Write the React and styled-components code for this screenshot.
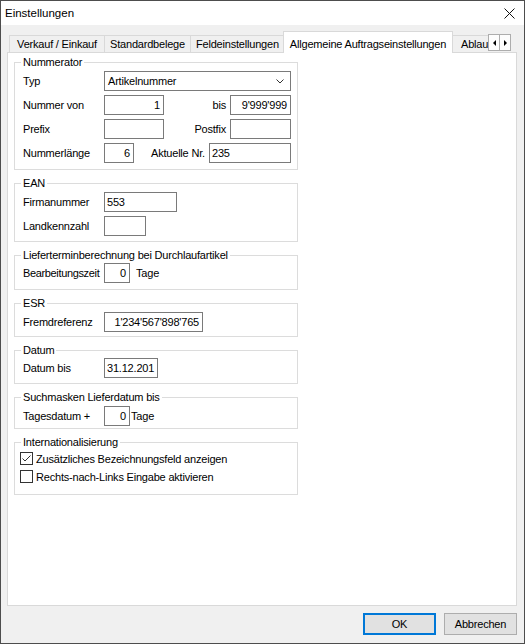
import React from 'react';
import styled, { createGlobalStyle } from 'styled-components';

const Global = createGlobalStyle`
  html, body { margin: 0; padding: 0; background: #fff; }
  body { font-family: "Liberation Sans", Arial, sans-serif; font-size: 11px; letter-spacing: -0.2px; color: #000; }
  * { box-sizing: border-box; }
`;

const Window = styled.div`
  width: 525px;
  height: 644px;
  border: 1px solid #4d4d4d;
  display: flex;
  flex-direction: column;
  background: #f0f0f0;
  overflow: hidden;
`;

const TitleBar = styled.div`
  height: 24px;
  flex: none;
  background: #fff;
  display: flex;
  align-items: center;
  justify-content: space-between;
  padding: 0 9px 0 4px;
  font-size: 11.5px;
  letter-spacing: 0;
`;

const Body = styled.div`
  flex: 1;
  display: flex;
  flex-direction: column;
  padding: 6px 7px 0 6px;
`;

const TabStrip = styled.div`
  height: 22px;
  margin-bottom: -1px;
  display: flex;
  align-items: flex-end;
  position: relative;
  z-index: 1;
`;

const TabsClip = styled.div`
  flex: 1;
  height: 22px;
  display: flex;
  align-items: flex-end;
  overflow: hidden;
  padding-left: 2px;
`;

const Tab = styled.div`
  flex: none;
  width: ${(p) => (p.$w ? `${p.$w}px` : 'auto')};
  height: ${(p) => (p.$active ? '22px' : '17px')};
  margin-bottom: ${(p) => (p.$active ? '0' : '1px')};
  margin-left: -1px;
  &:first-child { margin-left: 0; }
  padding: ${(p) => (p.$active ? '4px 5px 0' : `0 5px 0 ${p.$pl ?? 5}px`)};
  line-height: 16px;
  text-align: center;
  white-space: nowrap;
  background: ${(p) => (p.$active ? '#fff' : '#f0f0f0')};
  border: 1px solid #d9d9d9;
  border-bottom: none;
  position: relative;
  z-index: ${(p) => (p.$active ? 2 : 1)};
`;

const ScrollButtons = styled.div`
  flex: none;
  display: flex;
  margin: 0 6px 2px 0;
`;

const ScrollButton = styled.div`
  width: 12px;
  height: 17px;
  background: #fdfdfd;
  border: 1px solid #adadad;
  margin-left: ${(p) => (p.$second ? '-1px' : '0')};
  display: flex;
  align-items: center;
  justify-content: center;
`;

const Arrow = styled.span`
  width: 0;
  height: 0;
  border-top: 3px solid transparent;
  border-bottom: 3px solid transparent;
  ${(p) => (p.$dir === 'left' ? 'border-right: 3px solid #000;' : 'border-left: 3px solid #000;')}
`;

const Panel = styled.div`
  height: 554px;
  flex: none;
  background: #fff;
  border: 1px solid #d9d9d9;
  padding: 9px 0 0 6px;
`;

const Groups = styled.div`
  display: flex;
  flex-direction: column;
  gap: 13px;
  width: 284px;
`;

const Group = styled.div`
  position: relative;
  height: ${(p) => p.$h}px;
  border: 1px solid #dcdcdc;
  padding: ${(p) => p.$pt ?? 8}px 6px 0 ${(p) => p.$pl ?? 8}px;
`;

const Legend = styled.span`
  position: absolute;
  top: -7px;
  left: 6px;
  padding: 0 2px;
  line-height: 13px;
  background: #fff;
  white-space: nowrap;
`;

const Rows = styled.div`
  display: flex;
  flex-direction: column;
  gap: 4px;
`;

const Row = styled.div`
  display: flex;
  align-items: center;
  height: 20px;
`;

const Label = styled.span`
  flex: none;
  width: ${(p) => (p.$w ? `${p.$w}px` : '81px')};
  margin-left: ${(p) => p.$ml ?? 0}px;
  white-space: nowrap;
  letter-spacing: ${(p) => (p.$tight ? '-0.35px' : 'inherit')};
`;

const RightLabel = styled.span`
  flex: 1;
  text-align: right;
  padding-right: 4px;
  white-space: nowrap;
`;

const Unit = styled.span`
  margin-left: ${(p) => p.$ml}px;
  white-space: nowrap;
`;

const Field = styled.div`
  flex: ${(p) => (p.$w ? 'none' : '1')};
  width: ${(p) => (p.$w ? `${p.$w}px` : 'auto')};
  height: 20px;
  border: 1px solid #7a7a7a;
  background: #fff;
  padding: 0 3px 0 2px;
  line-height: 18px;
  text-align: ${(p) => (p.$right ? 'right' : 'left')};
  white-space: nowrap;
  overflow: hidden;
`;

const Select = styled.div`
  flex: 1;
  height: 20px;
  border: 1px solid #7a7a7a;
  background: #fff;
  padding: 0 6px 0 3px;
  display: flex;
  align-items: center;
  justify-content: space-between;
`;

const CheckList = styled.div`
  display: flex;
  flex-direction: column;
  gap: 5px;
`;

const CheckRow = styled.label`
  display: flex;
  align-items: center;
  gap: 3px;
  height: 13px;
  white-space: nowrap;
`;

const Box = styled.span`
  flex: none;
  width: 13px;
  height: 13px;
  border: 1px solid #333;
  background: #fff;
  display: flex;
`;

const Footer = styled.div`
  display: flex;
  justify-content: flex-end;
  gap: 8px;
  padding-top: 7px;
`;

const Button = styled.div`
  width: 73px;
  height: 22px;
  background: #e1e1e1;
  border: ${(p) => (p.$primary ? '2px solid #0078d7' : '1px solid #adadad')};
  display: flex;
  align-items: center;
  justify-content: center;
`;

const Check = ({ checked, children }) => (
  <CheckRow>
    <Box>
      {checked && (
        <svg width="11" height="11" viewBox="0 0 11 11">
          <polyline points="1.5,5.5 4,8 9.5,2.5" fill="none" stroke="#333" strokeWidth="1" />
        </svg>
      )}
    </Box>
    {children}
  </CheckRow>
);

export default function App() {
  return (
    <>
      <Global />
      <Window>
        <TitleBar>
          <span>Einstellungen</span>
          <svg width="11" height="11" viewBox="0 0 11 11">
            <path d="M0.5 0.5 L10.5 10.5 M10.5 0.5 L0.5 10.5" stroke="#111" strokeWidth="1" />
          </svg>
        </TitleBar>
        <Body>
          <TabStrip>
            <TabsClip>
              <Tab $w={96}>Verkauf / Einkauf</Tab>
              <Tab $w={87}>Standardbelege</Tab>
              <Tab $w={94}>Feldeinstellungen</Tab>
              <Tab $w={170} $active>Allgemeine Auftragseinstellungen</Tab>
              <Tab $pl={8}>Ablaufsteuerung</Tab>
            </TabsClip>
            <ScrollButtons>
              <ScrollButton><Arrow $dir="left" /></ScrollButton>
              <ScrollButton $second><Arrow $dir="right" /></ScrollButton>
            </ScrollButtons>
          </TabStrip>
          <Panel>
            <Groups>
              <Group $h={108}>
                <Legend>Nummerator</Legend>
                <Rows>
                  <Row>
                    <Label>Typ</Label>
                    <Select>
                      <span>Artikelnummer</span>
                      <svg width="8" height="5" viewBox="0 0 8 5">
                        <path d="M0.5 0.5 L4 4 L7.5 0.5" fill="none" stroke="#333" strokeWidth="1" />
                      </svg>
                    </Select>
                  </Row>
                  <Row>
                    <Label>Nummer von</Label>
                    <Field $w={60} $right>1</Field>
                    <RightLabel>bis</RightLabel>
                    <Field $w={61} $right>9'999'999</Field>
                  </Row>
                  <Row>
                    <Label>Prefix</Label>
                    <Field $w={60} />
                    <RightLabel>Postfix</RightLabel>
                    <Field $w={61} />
                  </Row>
                  <Row>
                    <Label>Nummerlänge</Label>
                    <Field $w={30} $right>6</Field>
                    <Label $w={58} $ml={17}>Aktuelle Nr.</Label>
                    <Field>235</Field>
                  </Row>
                </Rows>
              </Group>

              <Group $h={59}>
                <Legend>EAN</Legend>
                <Rows>
                  <Row>
                    <Label>Firmanummer</Label>
                    <Field $w={73}>553</Field>
                  </Row>
                  <Row>
                    <Label>Landkennzahl</Label>
                    <Field $w={42} />
                  </Row>
                </Rows>
              </Group>

              <Group $h={35} $pt={7}>
                <Legend>Lieferterminberechnung bei Durchlaufartikel</Legend>
                <Row>
                  <Label $tight>Bearbeitungszeit</Label>
                  <Field $w={26} $right>0</Field>
                  <Unit $ml={6}>Tage</Unit>
                </Row>
              </Group>

              <Group $h={34}>
                <Legend>ESR</Legend>
                <Row>
                  <Label>Fremdreferenz</Label>
                  <Field $w={99} $right>1'234'567'898'765</Field>
                </Row>
              </Group>

              <Group $h={34} $pt={7}>
                <Legend>Datum</Legend>
                <Row>
                  <Label>Datum bis</Label>
                  <Field $w={54}>31.12.201</Field>
                </Row>
              </Group>

              <Group $h={32}>
                <Legend>Suchmasken Lieferdatum bis</Legend>
                <Row>
                  <Label>Tagesdatum +</Label>
                  <Field $w={26} $right>0</Field>
                  <Unit $ml={1}>Tage</Unit>
                </Row>
              </Group>

              <Group $h={53} $pt={9} $pl={5}>
                <Legend>Internationalisierung</Legend>
                <CheckList>
                  <Check checked>Zusätzliches Bezeichnungsfeld anzeigen</Check>
                  <Check>Rechts-nach-Links Eingabe aktivieren</Check>
                </CheckList>
              </Group>
            </Groups>
          </Panel>
          <Footer>
            <Button $primary>OK</Button>
            <Button>Abbrechen</Button>
          </Footer>
        </Body>
      </Window>
    </>
  );
}
